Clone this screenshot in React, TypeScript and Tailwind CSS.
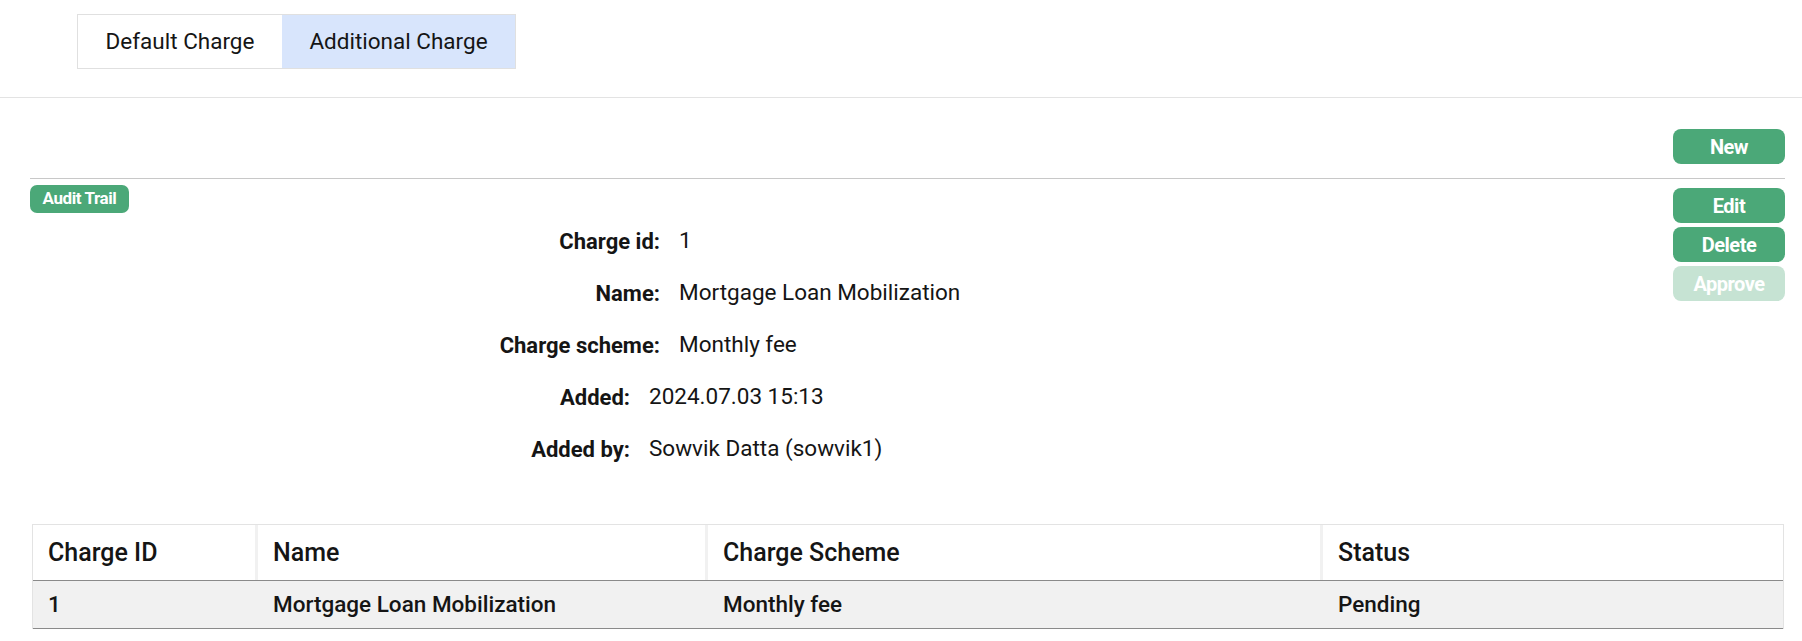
import React from 'react'

const font = { fontFamily: 'Roboto, "Noto Sans", sans-serif' }

type Row = { label: string; value: string }

const mainRows: Row[] = [
  { label: 'Charge id:', value: '1' },
  { label: 'Name:', value: 'Mortgage Loan Mobilization' },
  { label: 'Charge scheme:', value: 'Monthly fee' },
]

const auditRows: Row[] = [
  { label: 'Added:', value: '2024.07.03 15:13' },
  { label: 'Added by:', value: 'Sowvik Datta (sowvik1)' },
]

function DetailGroup({ rows, labelWidth }: { rows: Row[]; labelWidth: string }) {
  return (
    <div className={`grid ${labelWidth} gap-x-[19px]`}>
      {rows.map((r) => (
        <React.Fragment key={r.label}>
          <div className="h-[52px] flex items-center justify-end text-[22px] font-bold text-[#151515]">{r.label}</div>
          <div className="h-[52px] flex items-center text-[22.5px] text-[#151515]">{r.value}</div>
        </React.Fragment>
      ))}
    </div>
  )
}

function GreenButton({ children, disabled }: { children: React.ReactNode; disabled?: boolean }) {
  return (
    <button
      className={`w-[112px] h-[35px] rounded-[8px] text-white font-bold text-[20px] tracking-tight flex items-center justify-center ${
        disabled ? 'bg-[#c6e3d3]' : 'bg-[#4ba878]'
      }`}
    >
      {children}
    </button>
  )
}

export default function App() {
  const cols = ['Charge ID', 'Name', 'Charge Scheme', 'Status']
  const row = ['1', 'Mortgage Loan Mobilization', 'Monthly fee', 'Pending']

  return (
    <div className="w-[1802px] h-[641px] bg-white overflow-hidden text-[#151515]" style={font}>
      {/* tabs */}
      <div className="pt-[14px] pl-[77px] pb-[28px] border-b border-[#e3e3e3]">
        <div className="flex h-[55px] w-fit border border-[#e0e0e0]">
          <div className="w-[204px] flex items-center justify-center text-[22.5px] bg-white">Default Charge</div>
          <div className="w-[233px] flex items-center justify-center text-[22.5px] bg-[#d8e5fc]">Additional Charge</div>
        </div>
      </div>

      <div className="pl-[30px] pr-[17px]">
        <div className="flex justify-end pt-[31px] pb-[14px] border-b border-[#c8c8c8]">
          <GreenButton>New</GreenButton>
        </div>

        <div className="flex">
          <div className="flex-1">
            <div className="pt-[6px]">
              <span className="inline-flex items-center justify-center w-[99px] h-[28px] rounded-[7px] bg-[#4ba878] text-white font-bold text-[17px] tracking-tight">
                Audit Trail
              </span>
            </div>
            <div className="pt-[2px]">
              <DetailGroup rows={mainRows} labelWidth="grid-cols-[630px_1fr]" />
              <DetailGroup rows={auditRows} labelWidth="grid-cols-[600px_1fr]" />
            </div>
          </div>
          <div className="pt-[9px] flex flex-col gap-[4px]">
            <GreenButton>Edit</GreenButton>
            <GreenButton>Delete</GreenButton>
            <GreenButton disabled>Approve</GreenButton>
          </div>
        </div>

        {/* table */}
        <div className="mt-[49px] ml-[2px] mr-[1px] border-x border-t border-[#e3e3e3]">
          <div className="grid grid-cols-[222px_450px_615px_1fr] h-[56px] border-b border-[#8a8a8a]">
            {cols.map((c, i) => (
              <div
                key={c}
                className={`flex items-center pl-[15px] text-[25px] font-medium ${
                  i > 0 ? 'border-l-[3px] border-[#f1f1f1]' : ''
                }`}
              >
                {c}
              </div>
            ))}
          </div>
          <div className="grid grid-cols-[222px_450px_615px_1fr] h-[48px] bg-[#f1f1f1] border-b border-[#8a8a8a]">
            {row.map((c, i) => (
              <div
                key={i}
                className={`flex items-center pl-[15px] text-[22.5px] font-medium ${
                  i > 0 ? 'border-l-[3px] border-transparent' : ''
                }`}
              >
                {c}
              </div>
            ))}
          </div>
        </div>
      </div>
    </div>
  )
}
